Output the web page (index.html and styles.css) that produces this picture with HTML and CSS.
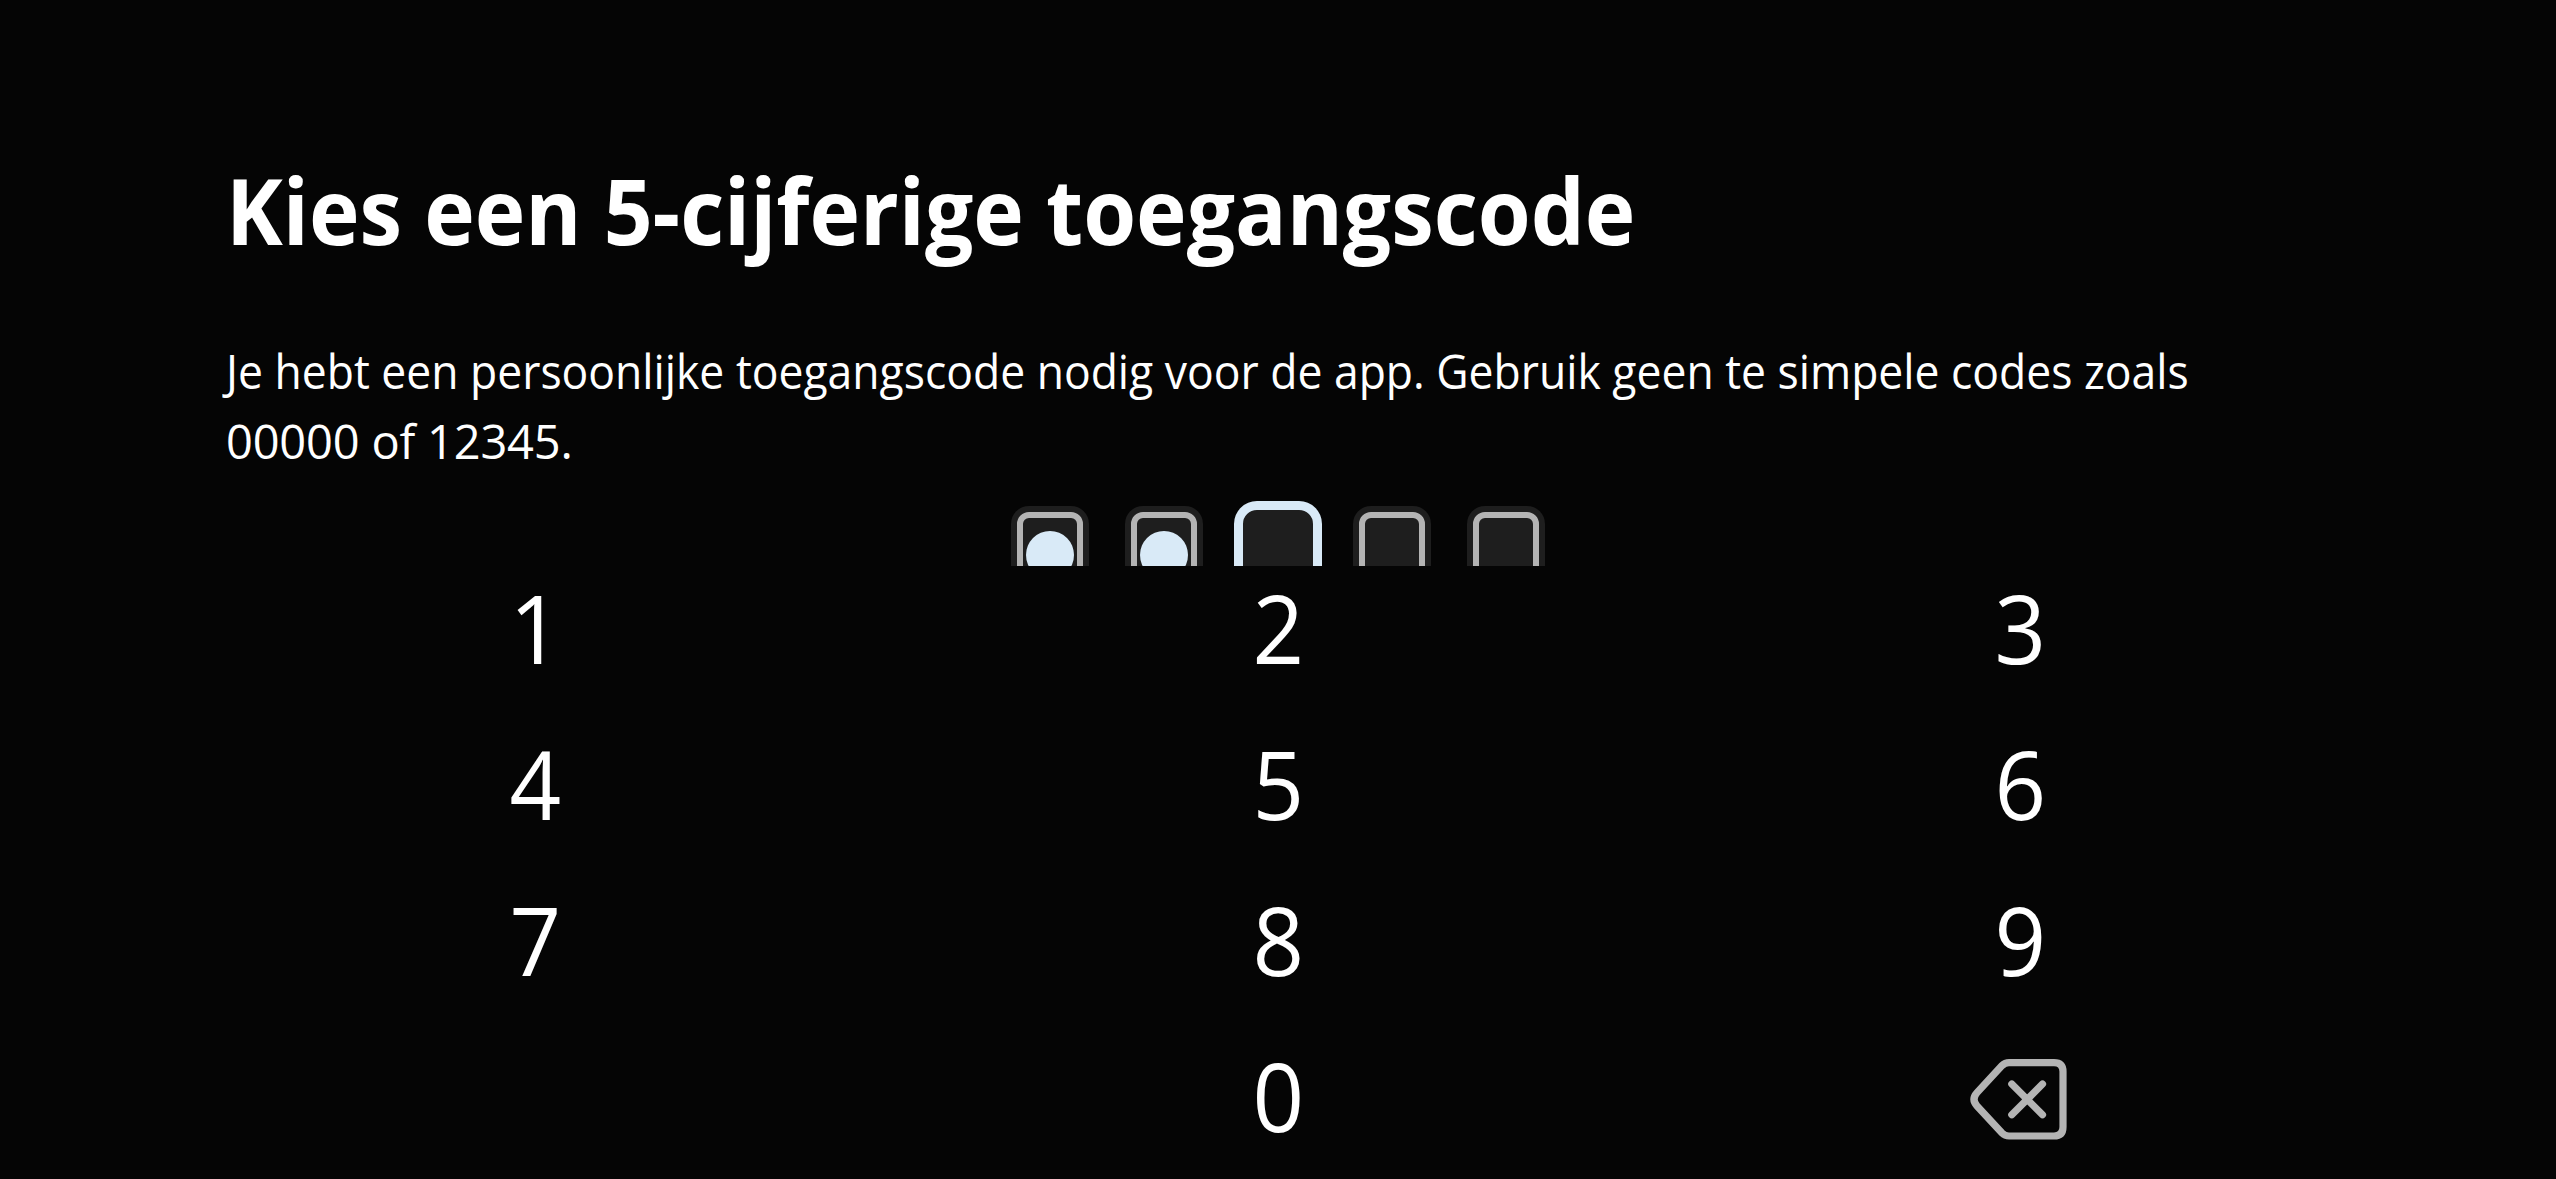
FILE: index.html
```html
<!DOCTYPE html>
<html lang="nl">
<head>
<meta charset="utf-8">
<title>Toegangscode</title>
<link rel="stylesheet" href="styles.css">
</head>
<body>
<main class="screen">
  <section class="intro">
    <h1 class="title">Kies een 5-cijferige toegangscode</h1>
    <p class="text"><span class="line line-one">Je hebt een persoonlijke toegangscode nodig voor de app. Gebruik geen te simpele codes zoals</span> <span class="line line-two">00000 of 12345.</span></p>
    <div class="pin">
      <div class="cell"><i class="dot"></i></div>
      <div class="cell"><i class="dot"></i></div>
      <div class="cell active"></div>
      <div class="cell"></div>
      <div class="cell"></div>
    </div>
  </section>
  <section class="keypad">
    <button class="key">1</button><button class="key">2</button><button class="key">3</button>
    <button class="key">4</button><button class="key">5</button><button class="key">6</button>
    <button class="key">7</button><button class="key">8</button><button class="key">9</button>
    <span></span><button class="key">0</button>
    <button class="key key-erase" aria-label="Wissen">
      <svg class="erase" viewBox="0 0 102 84" fill="none" stroke="#b4b4b4" stroke-width="7.2">
        <path d="M39 6.600H84Q93 6.600 93 15.600V71Q93 80 84 80H39Q35 80 32 77L7 50Q1 43.300 7 36.600L32 9.600Q35 6.600 39 6.600Z"/>
        <path stroke-linecap="round" d="M41.800 28L72.500 58.800M72.500 28L41.800 58.800"/>
      </svg>
    </button>
  </section>
</main>
</body>
</html>
```
FILE: styles.css
```css
*, *::before { box-sizing: border-box; }
body {
  margin: 0;
  background: #050505;
  color: #fff;
  font-family: "Open Sans", "Noto Sans", sans-serif;
}
.screen { height: 1179px; overflow: hidden; }
.intro {
  height: 566px;
  padding: 149px 226px 0;
  overflow: hidden;
}
.title {
  margin: 0;
  font-size: 91px;
  line-height: 122px;
  font-weight: 700;
  white-space: nowrap;
  transform: scaleX(0.94);
  transform-origin: left;
}
.text {
  margin: 65px 0 0;
  font-size: 47px;
  line-height: 70px;
}
.line { display: block; white-space: nowrap; transform-origin: left; }
.line-one { transform: scaleX(0.946); }
.line-two { letter-spacing: -0.2px; }
.pin {
  display: flex;
  justify-content: center;
  gap: 36px;
  margin-top: 30px;
}
.cell {
  display: flex;
  width: 78px;
  height: 98px;
  padding: 6px;
  border-radius: 18px;
  background: #1e1e1e;
}
.cell::before {
  content: "";
  flex: none;
  width: 66px;
  height: 86px;
  border: 6px solid #b4b4b4;
  border-radius: 12px;
}
.dot {
  flex: none;
  width: 48px;
  height: 48px;
  margin: 19px 0 0 -57px;
  border-radius: 50%;
  background: #d9eaf7;
}
.active { outline: 9px solid #d9eaf7; outline-offset: -4px; }
.active::before { display: none; }
.keypad {
  display: grid;
  grid-template-columns: repeat(3, 1fr);
  grid-auto-rows: 128px;
  row-gap: 28px;
  padding: 0 164px;
}
.key {
  display: flex;
  align-items: center;
  justify-content: center;
  padding: 0 0 6px;
  border: 0;
  background: none;
  color: inherit;
  font: 400 96px/128px "Open Sans", "Noto Sans", sans-serif;
  transform: scaleX(0.94);
}
.key-erase { padding: 0; transform: none; }
.erase { width: 102px; height: 84px; }
```
